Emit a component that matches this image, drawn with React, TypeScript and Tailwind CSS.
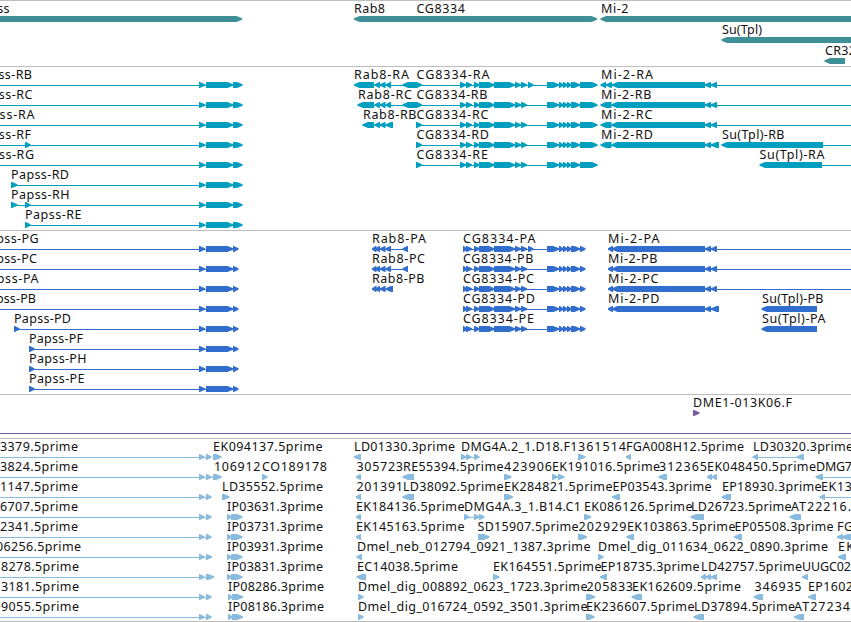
type Label = [text: string, start: number, end: number];
type Exon = [start: number, end: number];

interface Feature {
  exons: Exon[];
  reverse?: boolean;
  // intron line, when it runs further than the exons
  line?: [number, number];
}

interface Row {
  labels: Label[];
  features: Feature[];
}

const WIDTH = 851;
const BAR_TOP = 15;
const BAR_HEIGHT = 6;
const HEAD = 5.5;

const fwd = (...exons: Exon[]): Feature => ({ exons });
const rev = (...exons: Exon[]): Feature => ({ exons, reverse: true });
const withLine = (f: Feature, from: number, to: number): Feature => ({ ...f, line: [from, to] });

const GENES: Row[] = [
  {
    labels: [["Papss", -26, 9.5], ["Rab8", 354, 385], ["CG8334", 416.5, 465], ["Mi-2", 601, 628.5]],
    features: [fwd([-30, 242]), rev([354, 420]), fwd([416, 597]), rev([600.5, 900])],
  },
  { labels: [["Su(Tpl)", 722, 762]], features: [rev([721.5, 900])] },
  { labels: [["CR32", 825, 856]], features: [rev([824.5, 845])] },
];

const PAPSS_R: Exon[] = [[199, 205], [206, 233], [233, 242.5]];
const PAPSS_P: Exon[] = [[199, 205], [206, 233], [233, 238.5]];
const RAB8: Exon[] = [[374.5, 380], [380, 385.5], [385.5, 391]];
const CG_MID: Exon[] = [[474, 479.5], [479, 494.5], [494, 515], [515, 521], [521, 527]];
const CG_END: Exon[] = [[547, 559], [559, 563.5], [563, 567.5], [567, 571.5], [571, 580]];
const CG_R: Exon[] = [[416, 422], [460, 466], [466, 472], ...CG_MID, ...CG_END, [580, 597.5]];
const CG_P: Exon[] = [[463, 467], [466, 472], ...CG_MID, ...CG_END, [580, 585.5]];
const MI2: Exon[] = [[705, 711], [711, 717]];
const SHORT: Exon = [528, 533.5];

const TRANSCRIPTS: Row[] = [
  {
    labels: [["Papss-RB", -25, 32], ["Rab8-RA", 354, 409], ["CG8334-RA", 416.5, 489.5], ["Mi-2-RA", 601, 653]],
    features: [
      withLine(fwd(...PAPSS_R), -10, 240),
      rev([354, 374], ...RAB8, [402.5, 416]),
      fwd(...CG_R, SHORT),
      withLine(rev([600.5, 606], [606, 612], [612, 705], ...MI2), 603, 860),
    ],
  },
  {
    labels: [["Papss-RC", -25, 32.5], ["Rab8-RC", 358, 412], ["CG8334-RB", 416.5, 487.5], ["Mi-2-RB", 601, 651.5]],
    features: [
      withLine(fwd(...PAPSS_R), -10, 240),
      rev([357.5, 374], ...RAB8, [402.5, 416]),
      fwd(...CG_R),
      withLine(rev([600.5, 611.5], [611.5, 705], ...MI2), 603, 860),
    ],
  },
  {
    labels: [["Papss-RA", -25, 34.5], ["Rab8-RB", 363, 416.5], ["CG8334-RC", 416.5, 488.5], ["Mi-2-RC", 601, 652.5]],
    features: [
      withLine(fwd(...PAPSS_R), -10, 240),
      rev([362.5, 374], [374.5, 380], [380, 385.5], [385.5, 393]),
      fwd(...CG_R),
      withLine(rev([600.5, 611.5], [611.5, 705], ...MI2), 603, 860),
    ],
  },
  {
    labels: [["Papss-RF", -25, 31], ["CG8334-RD", 416.5, 489], ["Mi-2-RD", 601, 653], ["Su(Tpl)-RB", 722, 784.5]],
    features: [
      withLine(fwd([25, 30.5], ...PAPSS_R), -10, 240),
      fwd(...CG_R),
      rev([600.5, 611.5], [611.5, 705], [705, 711], [711, 719]),
      withLine(rev([721.5, 823]), 724, 860),
    ],
  },
  {
    labels: [["Papss-RG", -25, 34], ["CG8334-RE", 416.5, 488], ["Su(Tpl)-RA", 759.5, 824.5]],
    features: [withLine(fwd(...PAPSS_R), -10, 240), fwd(...CG_R), withLine(rev([759.5, 822]), 764, 860)],
  },
  { labels: [["Papss-RD", 11, 69]], features: [fwd([11, 17.5], ...PAPSS_R)] },
  { labels: [["Papss-RH", 11, 69.5]], features: [fwd([11, 17.5], [25, 30.5], ...PAPSS_R)] },
  { labels: [["Papss-RE", 25, 81.5]], features: [fwd([25, 30.5], ...PAPSS_R)] },
];

const PROTEINS: Row[] = [
  {
    labels: [["Papss-PG", -19, 38.5], ["Rab8-PA", 372, 426], ["CG8334-PA", 463, 535.5], ["Mi-2-PA", 608, 659.5]],
    features: [
      withLine(fwd(...PAPSS_P), -10, 236),
      rev([372, 376.5], [375.5, 380], [380, 385.5], [385.5, 391], [402.5, 408]),
      fwd(...CG_P, SHORT),
      withLine(rev([608, 613], [612, 705], ...MI2), 610, 860),
    ],
  },
  {
    labels: [["Papss-PC", -19, 37], ["Rab8-PC", 372, 425], ["CG8334-PB", 463, 533.5], ["Mi-2-PB", 608, 657.5]],
    features: [
      withLine(fwd(...PAPSS_P), -10, 236),
      rev([372, 376.5], [375.5, 380], [380, 385.5], [385.5, 391], [402.5, 408]),
      fwd(...CG_P),
      withLine(rev([608, 613], [612, 705], ...MI2), 610, 860),
    ],
  },
  {
    labels: [["Papss-PA", -19, 38.5], ["Rab8-PB", 372, 424.5], ["CG8334-PC", 463, 534], ["Mi-2-PC", 608, 658.5]],
    features: [
      withLine(fwd(...PAPSS_P), -10, 236),
      rev([372, 376.5], [375.5, 380], [380, 385.5], [385.5, 393]),
      fwd(...CG_P),
      withLine(rev([608, 613], [612, 705], ...MI2), 610, 860),
    ],
  },
  {
    labels: [["Papss-PB", -19, 36], ["CG8334-PD", 463, 535], ["Mi-2-PD", 608, 659.5], ["Su(Tpl)-PB", 762, 823.5]],
    features: [
      withLine(fwd(...PAPSS_P), -10, 236),
      fwd(...CG_P),
      rev([608, 613], [612, 705], [705, 711], [711, 719]),
      rev([761.5, 817]),
    ],
  },
  {
    labels: [["Papss-PD", 14, 71], ["CG8334-PE", 463, 534], ["Su(Tpl)-PA", 762, 825.5]],
    features: [fwd([14, 19.5], ...PAPSS_P), fwd(...CG_P), rev([761.5, 817])],
  },
  { labels: [["Papss-PF", 29, 83]], features: [fwd([29, 34.5], ...PAPSS_P)] },
  { labels: [["Papss-PH", 29, 86.5]], features: [fwd([29, 34.5], ...PAPSS_P)] },
  { labels: [["Papss-PE", 29, 84.5]], features: [fwd([29, 34.5], ...PAPSS_P)] },
];

const BAC: Row[] = [{ labels: [["DME1-013K06.F", 693, 792]], features: [fwd([693, 699.5])] }];

const spliced = (...exons: Exon[]) => withLine(fwd([199, 204.5], ...exons), -10, 208);

const ESTS: Row[] = [
  {
    labels: [
      ["3379.5prime", 0, 78], ["EK094137.5prime", 213, 322.5], ["LD01330.3prime", 354, 455],
      ["DMG4A.2_1.D18.F1", 461, 577.5], ["361514", 578, 626], ["FGA008H12.5prime", 626, 744],
      ["LD30320.3prime", 753, 853],
    ],
    features: [
      spliced([206, 211.5]), fwd([213, 221.5]), rev([354, 361]), fwd([461, 466], [466, 471.5], [474, 479.5]),
      fwd([578, 585.5]), rev([626, 631]), rev([752.5, 758], [796.5, 804]),
    ],
  },
  {
    labels: [
      ["3824.5prime", 0, 78], ["106912", 214, 260.5], ["CO189178", 262, 327], ["305723", 356.5, 403],
      ["RE55394.5prime", 403, 503.5], ["423906", 504, 552], ["EK191016.5prime", 552, 660],
      ["312365", 659, 707], ["EK048450.5prime", 707, 816], ["DMG7", 816, 852],
    ],
    features: [
      withLine(spliced([206, 211.5], [213, 221.5]), -10, 215), fwd([262, 267.5]), rev([356, 361]),
      rev([402.5, 414]), fwd([504, 511.5]), fwd([552, 558], [558, 564.5]), rev([658.5, 667]),
      rev([707, 712], [712, 717]), withLine(rev([815.5, 823]), 818, 860),
    ],
  },
  {
    labels: [
      ["1147.5prime", 0, 78], ["LD35552.5prime", 222, 323], ["201391", 356.5, 403],
      ["LD38092.5prime", 403, 503.5], ["EK284821.5prime", 504, 612.5], ["EP03543.3prime", 612.5, 711.5],
      ["EP18930.3prime", 722, 821.5], ["EK13", 821, 852],
    ],
    features: [
      spliced([206, 211.5]), fwd([222, 229.5]), rev([356, 361]), rev([402.5, 414]), fwd([504, 513]),
      rev([612, 620]), rev([721.5, 731]), withLine(rev([819.5, 825]), 822, 860),
    ],
  },
  {
    labels: [
      ["6707.5prime", 0, 78], ["IP03631.3prime", 227, 323], ["EK184136.5prime", 356, 464.5],
      ["DMG4A.3_1.B14.C1", 464, 581], ["EK086126.5prime", 584, 692.5], ["LD26723.5prime", 691, 791.5],
      ["AT22216.", 791, 851],
    ],
    features: [
      spliced([206, 211.5]), fwd([227, 231.5], [231, 242.5]), rev([356, 361]),
      fwd([464, 469.5], [474, 479.5], [479, 484.5]), fwd([584, 591]), rev([690.5, 704]), rev([789.5, 801]),
    ],
  },
  {
    labels: [
      ["2341.5prime", 0, 78], ["IP03731.3prime", 227, 323], ["EK145163.5prime", 356, 464.5],
      ["SD15907.5prime", 477.5, 578.5], ["202929", 578.5, 626.5], ["EK103863.5prime", 627, 735.5],
      ["EP05508.3prime", 734.5, 833.5], ["FG", 837, 853],
    ],
    features: [
      spliced([206, 211.5]), fwd([227, 231.5], [231, 242.5]), rev([356, 361]), fwd([478, 489.5]),
      fwd([578, 587]), rev([626.5, 634]), rev([734, 742]), rev([837, 843], [842, 860]),
    ],
  },
  {
    labels: [
      ["06256.5prime", -4, 81], ["IP03931.3prime", 227, 323], ["Dmel_neb_012794_0921_1387.3prime", 357, 590.5],
      ["Dmel_dig_011634_0622_0890.3prime", 598, 828], ["EK", 838, 854],
    ],
    features: [
      spliced([206, 212]), fwd([227, 231.5], [231, 242.5]), rev([356.5, 362]), fwd([598, 603.5]),
      rev([838, 846]),
    ],
  },
  {
    labels: [
      ["8278.5prime", 1, 79], ["IP03831.3prime", 227, 323], ["EC14038.5prime", 357, 458],
      ["EK164551.5prime", 493, 601.5], ["EP18735.3prime", 600.5, 699.5], ["LD42757.5prime", 701, 802],
      ["UUGC02", 802, 851],
    ],
    features: [
      spliced([206, 214]), fwd([227, 231.5], [231, 242.5]), rev([356.5, 366]), fwd([493, 499.5]),
      rev([600, 607]), rev([701, 706], [706, 711], [711, 717]), rev([802, 808]),
    ],
  },
  {
    labels: [
      ["3181.5prime", 1, 79], ["IP08286.3prime", 228, 324], ["Dmel_dig_008892_0623_1723.3prime", 358, 587.5],
      ["205833", 586.5, 633], ["EK162609.5prime", 632, 741], ["346935", 754.5, 801.5], ["EP1602", 808, 853],
    ],
    features: [
      spliced([206, 211.5]), fwd([228, 232.5], [232, 243]), fwd([358, 363.5]), fwd([586, 595]),
      rev([631.5, 642]), rev([753.5, 763]), rev([808, 816]),
    ],
  },
  {
    labels: [
      ["9055.5prime", 1, 79], ["IP08186.3prime", 228, 324], ["Dmel_dig_016724_0592_3501.3prime", 358, 587.5],
      ["EK236607.5prime", 586, 694.5], ["LD37894.5prime", 694, 795], ["AT27234", 794, 850],
    ],
    features: [
      spliced([206, 211.5]), fwd([228, 232.5], [232, 243]), fwd([358, 363.5]), fwd([586, 594.5]),
      rev([693.5, 704]), rev([794, 804]),
    ],
  },
];

// box with a blunt arrow head on the strand's 3' side
function exonPoints([a, b]: Exon, top: number, reverse?: boolean) {
  const head = Math.min(HEAD, b - a - 0.8);
  const bottom = top + BAR_HEIGHT;
  const mid = top + BAR_HEIGHT / 2;
  const [tail, tip] = reverse ? [b, a] : [a, b];
  const neck = reverse ? a + head : b - head;
  return [
    [tail, top],
    [neck, top],
    [tip, mid - 0.7],
    [tip, mid + 0.7],
    [neck, bottom],
    [tail, bottom],
  ]
    .map((p) => p.join(","))
    .join(" ");
}

function FeatureGlyph({ feature, top }: { feature: Feature; top: number }) {
  const { exons, reverse, line } = feature;
  const from = line ? line[0] : Math.min(...exons.map((e) => e[0])) + 2;
  const to = line ? line[1] : Math.max(...exons.map((e) => e[1])) - 2;
  return (
    <g>
      <rect x={Math.round(from)} y={top + 3} width={Math.round(to - from)} height={1} />
      {exons.map((exon, i) => (
        <polygon key={i} points={exonPoints(exon, top, reverse)} />
      ))}
    </g>
  );
}

interface TrackProps {
  rows: Row[];
  height: number;
  className: string;
  pitch?: number;
}

function Track({ rows, height, className, pitch = 20 }: TrackProps) {
  return (
    <section className="shrink-0 border-t border-[#bdbdbd]">
      <svg width={WIDTH} height={height} className={`block overflow-hidden ${className}`}>
        {rows.map((row, i) => {
          const top = BAR_TOP + i * pitch;
          return (
            <g key={i}>
              {row.features.map((f, j) => (
                <FeatureGlyph key={j} feature={f} top={top} />
              ))}
              {row.labels.map(([text, start, end]) => (
                <text
                  key={text}
                  x={start}
                  y={top - 3}
                  textLength={end - start}
                  lengthAdjust="spacing"
                  className="fill-[#111] font-['Noto_Sans',sans-serif] text-[12.5px]"
                >
                  {text}
                </text>
              ))}
            </g>
          );
        })}
      </svg>
    </section>
  );
}

export default function App() {
  return (
    <main className="flex h-[622px] w-[851px] flex-col overflow-hidden border-b border-[#bdbdbd] bg-white">
      <Track rows={GENES} height={65} pitch={21} className="fill-[#3f8f96]" />
      <Track rows={TRANSCRIPTS} height={163} className="fill-[#009fc0]" />
      <Track rows={PROTEINS} height={163} className="fill-[#306dcc]" />
      <Track rows={BAC} height={38} className="fill-[#7759a6]" />
      <div className="h-[5px] shrink-0 border-t border-[#7759a6]" />
      <Track rows={ESTS} height={182} className="fill-[#88bbdd]" />
    </main>
  );
}
